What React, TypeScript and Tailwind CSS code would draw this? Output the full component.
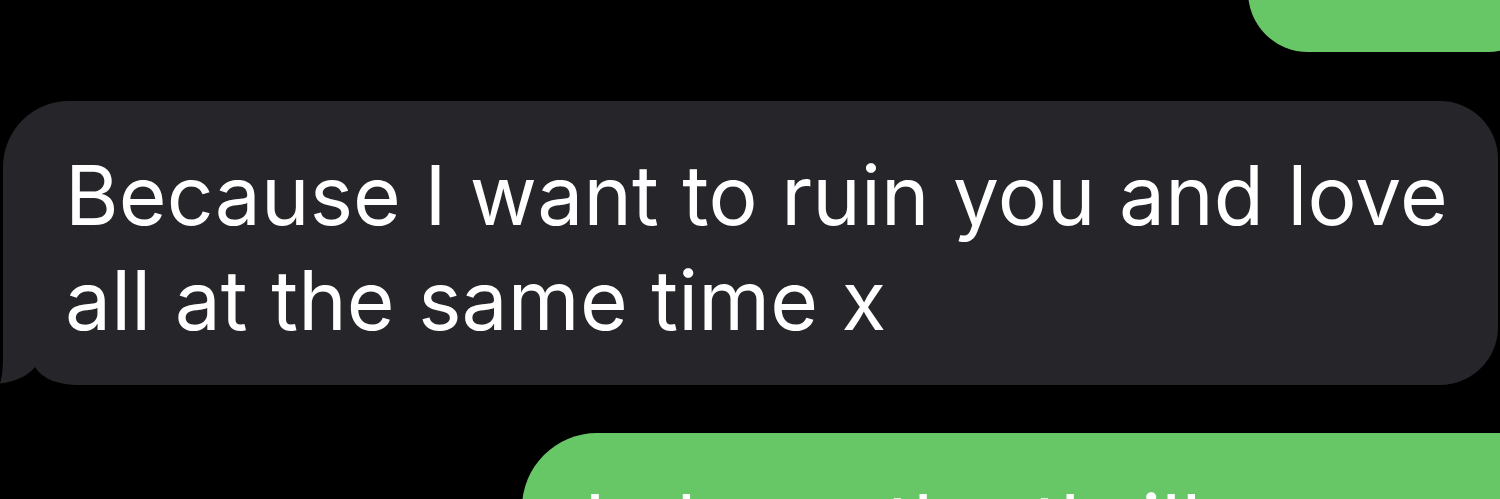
export default function App() {
  return (
    <div className="w-[1500px] h-[499px] bg-black overflow-hidden flex flex-col font-['Inter',sans-serif]">
      <div className="flex justify-end">
        <div className="w-[300px] h-[120px] -mt-[68px] -mr-[48px] bg-[#67c666] rounded-[70px] shrink-0" />
      </div>

      <div className="relative mt-[49px] ml-[3px] w-[1495px] bg-[#262529] rounded-tl-[66px] rounded-tr-[58px] rounded-br-[58px] rounded-bl-none pl-[62px] pt-[42px] pb-[32px]">
        <p className="text-white text-[82px] leading-[105px] tracking-[0.2px] whitespace-nowrap">
          Because I want to ruin you and love
          <br />
          all at the same time x
        </p>
        <svg
          className="absolute left-[-3px] bottom-0"
          width="80"
          height="40"
          viewBox="0 0 80 40"
        >
          <path d="M3,0 L3,10 C3,24 2,32 0,38 L0,40 L12,40 L12,0 Z" fill="#262529" />
          <path d="M-1,41 L-1,38.6 C14,37.5 28,31 35,22 C42,33 55,39.5 80,40.2 L80,41 Z" fill="#000000" />
        </svg>
      </div>

      <div className="mt-[48px] ml-[522px] w-[1100px] shrink-0 bg-[#67c666] rounded-tl-[75px] rounded-tr-[75px] pl-[62px] pt-[39px] pb-[40px]">
        <p className="text-white text-[82px] leading-[105px] tracking-[0.2px] whitespace-nowrap">
          I chase the thrill
        </p>
      </div>
    </div>
  );
}
